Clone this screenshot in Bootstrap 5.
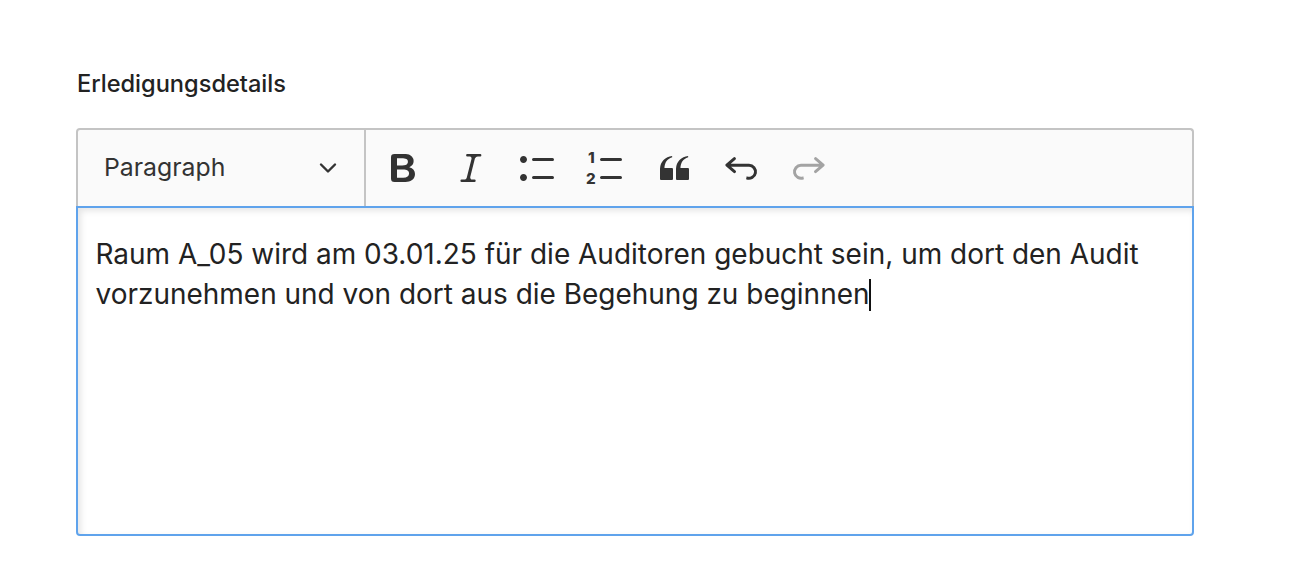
<!DOCTYPE html>
<html lang="de">
<head>
<meta charset="utf-8">
<title>Erledigungsdetails</title>
<link href="https://cdn.jsdelivr.net/npm/bootstrap@5.3.0/dist/css/bootstrap.min.css" rel="stylesheet">
<style>
html,body{height:100%;overflow:hidden}
body{font-family:Inter,"Liberation Sans",sans-serif;color:#222;background:#fff}
.page-wrap{width:1118px;margin-left:76px;padding-top:69px}
.field-label{display:block;font-size:23.6px;font-weight:500;line-height:30px;margin:0 0 29px 1px;color:#222}
.ed-toolbar{height:78px;background:#fafafa;border:2px solid #c4c4c4;border-bottom:0;border-radius:4px 4px 0 0}
.ed-select{width:288px;height:100%;padding:0 26px;border-right:2px solid #c4c4c4;font-size:24.8px;color:#333}
.ed-tools{padding-left:17.3px;gap:27.6px}
.ed-icon{width:40px;height:40px;display:block;fill:#333}
.ed-icon.off{fill:#a3a3a3}
.num-glyph{font:800 7.6px Inter,sans-serif;fill:#333}
.ed-chev{width:20px;height:20px;fill:none;stroke:#333;stroke-width:2.4;stroke-linecap:round;stroke-linejoin:round}
.ed-area{height:330px;padding:26px 17.5px;border:2px solid #5fa3ec;border-radius:0 0 4px 4px;box-shadow:inset 3px 3px 6px rgba(0,0,0,.1);font-size:27.97px;line-height:40px;color:#222;background:#fff}
.ed-caret{display:inline-block;width:2px;height:32px;background:#111;vertical-align:-7px;margin-left:-1px}
</style>
</head>
<body>
<div class="page-wrap">
  <label class="field-label">Erledigungsdetails</label>
  <div class="ed-toolbar d-flex align-items-center">
    <div class="ed-select d-flex align-items-center justify-content-between flex-shrink-0">
      <span>Paragraph</span>
      <svg class="ed-chev" viewBox="0 0 20 20"><path d="M3 6.5l7 7 7-7"/></svg>
    </div>
    <div class="ed-tools d-flex align-items-center">
      <svg class="ed-icon" viewBox="0 0 20 20"><path d="M10.187 17H5.773c-.637 0-1.092-.138-1.364-.415-.273-.277-.409-.718-.409-1.323V4.738c0-.617.14-1.062.419-1.332.279-.27.73-.406 1.354-.406h4.68c.69 0 1.288.041 1.794.124.506.083.96.242 1.36.478.341.197.644.447.906.75a3.262 3.262 0 0 1 .808 2.162c0 1.401-.722 2.426-2.167 3.075C15.05 10.175 16 11.315 16 13.01a3.756 3.756 0 0 1-2.296 3.504 6.1 6.1 0 0 1-1.517.377c-.571.073-1.238.11-2 .11zm-.217-6.217H7v4.087h3.069c1.977 0 2.965-.69 2.965-2.072 0-.707-.256-1.22-.768-1.537-.512-.319-1.277-.478-2.296-.478zM7 5.13v3.619h2.606c.729 0 1.292-.067 1.69-.2a1.6 1.6 0 0 0 .91-.765c.165-.267.247-.566.247-.897 0-.707-.26-1.176-.778-1.409-.519-.232-1.31-.348-2.375-.348H7z"/></svg>
      <svg class="ed-icon" viewBox="0 0 20 20"><path d="m9.586 14.633.021.004c-.036.335.095.655.393.962.082.083.173.15.274.201h1.474a.6.6 0 1 1 0 1.2H5.304a.6.6 0 0 1 0-1.2h1.15c.474-.07.809-.182 1.005-.334.157-.122.291-.32.404-.597l2.416-9.55a1.053 1.053 0 0 0-.281-.823 1.12 1.12 0 0 0-.442-.296H8.15a.6.6 0 0 1 0-1.2h6.443a.6.6 0 1 1 0 1.2h-1.195c-.376.056-.65.155-.823.296-.215.175-.423.439-.623.79l-2.366 9.347z"/></svg>
      <svg class="ed-icon" viewBox="0 0 20 20"><path d="M7 5.75c0 .414.336.75.75.75h9.5a.75.75 0 1 0 0-1.5h-9.5a.75.75 0 0 0-.75.75zm-6 0C1 4.784 1.777 4 2.75 4c.966 0 1.75.777 1.75 1.75 0 .966-.777 1.75-1.75 1.75C1.784 7.5 1 6.723 1 5.75zm6 9c0 .414.336.75.75.75h9.5a.75.75 0 1 0 0-1.5h-9.5a.75.75 0 0 0-.75.75zm-6 0c0-.966.777-1.75 1.75-1.75.966 0 1.75.777 1.75 1.75 0 .966-.777 1.75-1.75 1.75-.966 0-1.75-.777-1.75-1.75z"/></svg>
      <svg class="ed-icon" viewBox="0 0 20 20"><path d="M7 5.75c0 .414.336.75.75.75h9.5a.75.75 0 1 0 0-1.5h-9.5a.75.75 0 0 0-.75.75zM7 14.75c0 .414.336.75.75.75h9.5a.75.75 0 1 0 0-1.5h-9.5a.75.75 0 0 0-.75.75z"/><text class="num-glyph" x="1" y="7.6">1</text><text class="num-glyph" x="0" y="18">2</text></svg>
      <svg class="ed-icon" viewBox="0 0 20 20"><path d="M3 10.423a6.5 6.5 0 0 1 6.056-6.408l.038.67C6.448 5.423 5.354 7.663 5.22 10H9c.552 0 .5.432.5.986v4.511c0 .554-.448.503-1 .503h-5c-.552 0-.5-.449-.5-1.003v-4.574zm8 0a6.5 6.5 0 0 1 6.056-6.408l.038.67c-2.646.739-3.74 2.979-3.873 5.315H17c.552 0 .5.432.5.986v4.511c0 .554-.448.503-1 .503h-5c-.552 0-.5-.449-.5-1.003v-4.574z"/></svg>
      <svg class="ed-icon" viewBox="0 0 20 20"><path d="m5.042 9.367 2.189 1.837a.75.75 0 0 1-.965 1.149l-3.788-3.18a.747.747 0 0 1-.21-.284.75.75 0 0 1 .17-.945L6.23 4.762a.75.75 0 1 1 .964 1.15L4.863 7.866h8.917A.75.75 0 0 1 14 7.9a4 4 0 1 1-1.477 7.718l.344-1.489a2.5 2.5 0 1 0 1.094-4.73l.008-.032H5.042z"/></svg>
      <svg class="ed-icon off" viewBox="0 0 20 20"><path d="m14.958 9.367-2.189 1.837a.75.75 0 0 0 .965 1.149l3.788-3.18a.747.747 0 0 0 .21-.284.75.75 0 0 0-.17-.945L13.77 4.762a.75.75 0 1 0-.964 1.15l2.331 1.955H6.22A.75.75 0 0 0 6 7.9a4 4 0 1 0 1.477 7.718l-.344-1.489A2.5 2.5 0 1 1 6.039 9.4l-.008-.032h8.927z"/></svg>
    </div>
  </div>
  <div class="ed-area">Raum A_05 wird am 03.01.25 für die Auditoren gebucht sein, um dort den Audit vorzunehmen und von dort aus die Begehung zu beginnen<span class="ed-caret"></span></div>
</div>
</body>
</html>
